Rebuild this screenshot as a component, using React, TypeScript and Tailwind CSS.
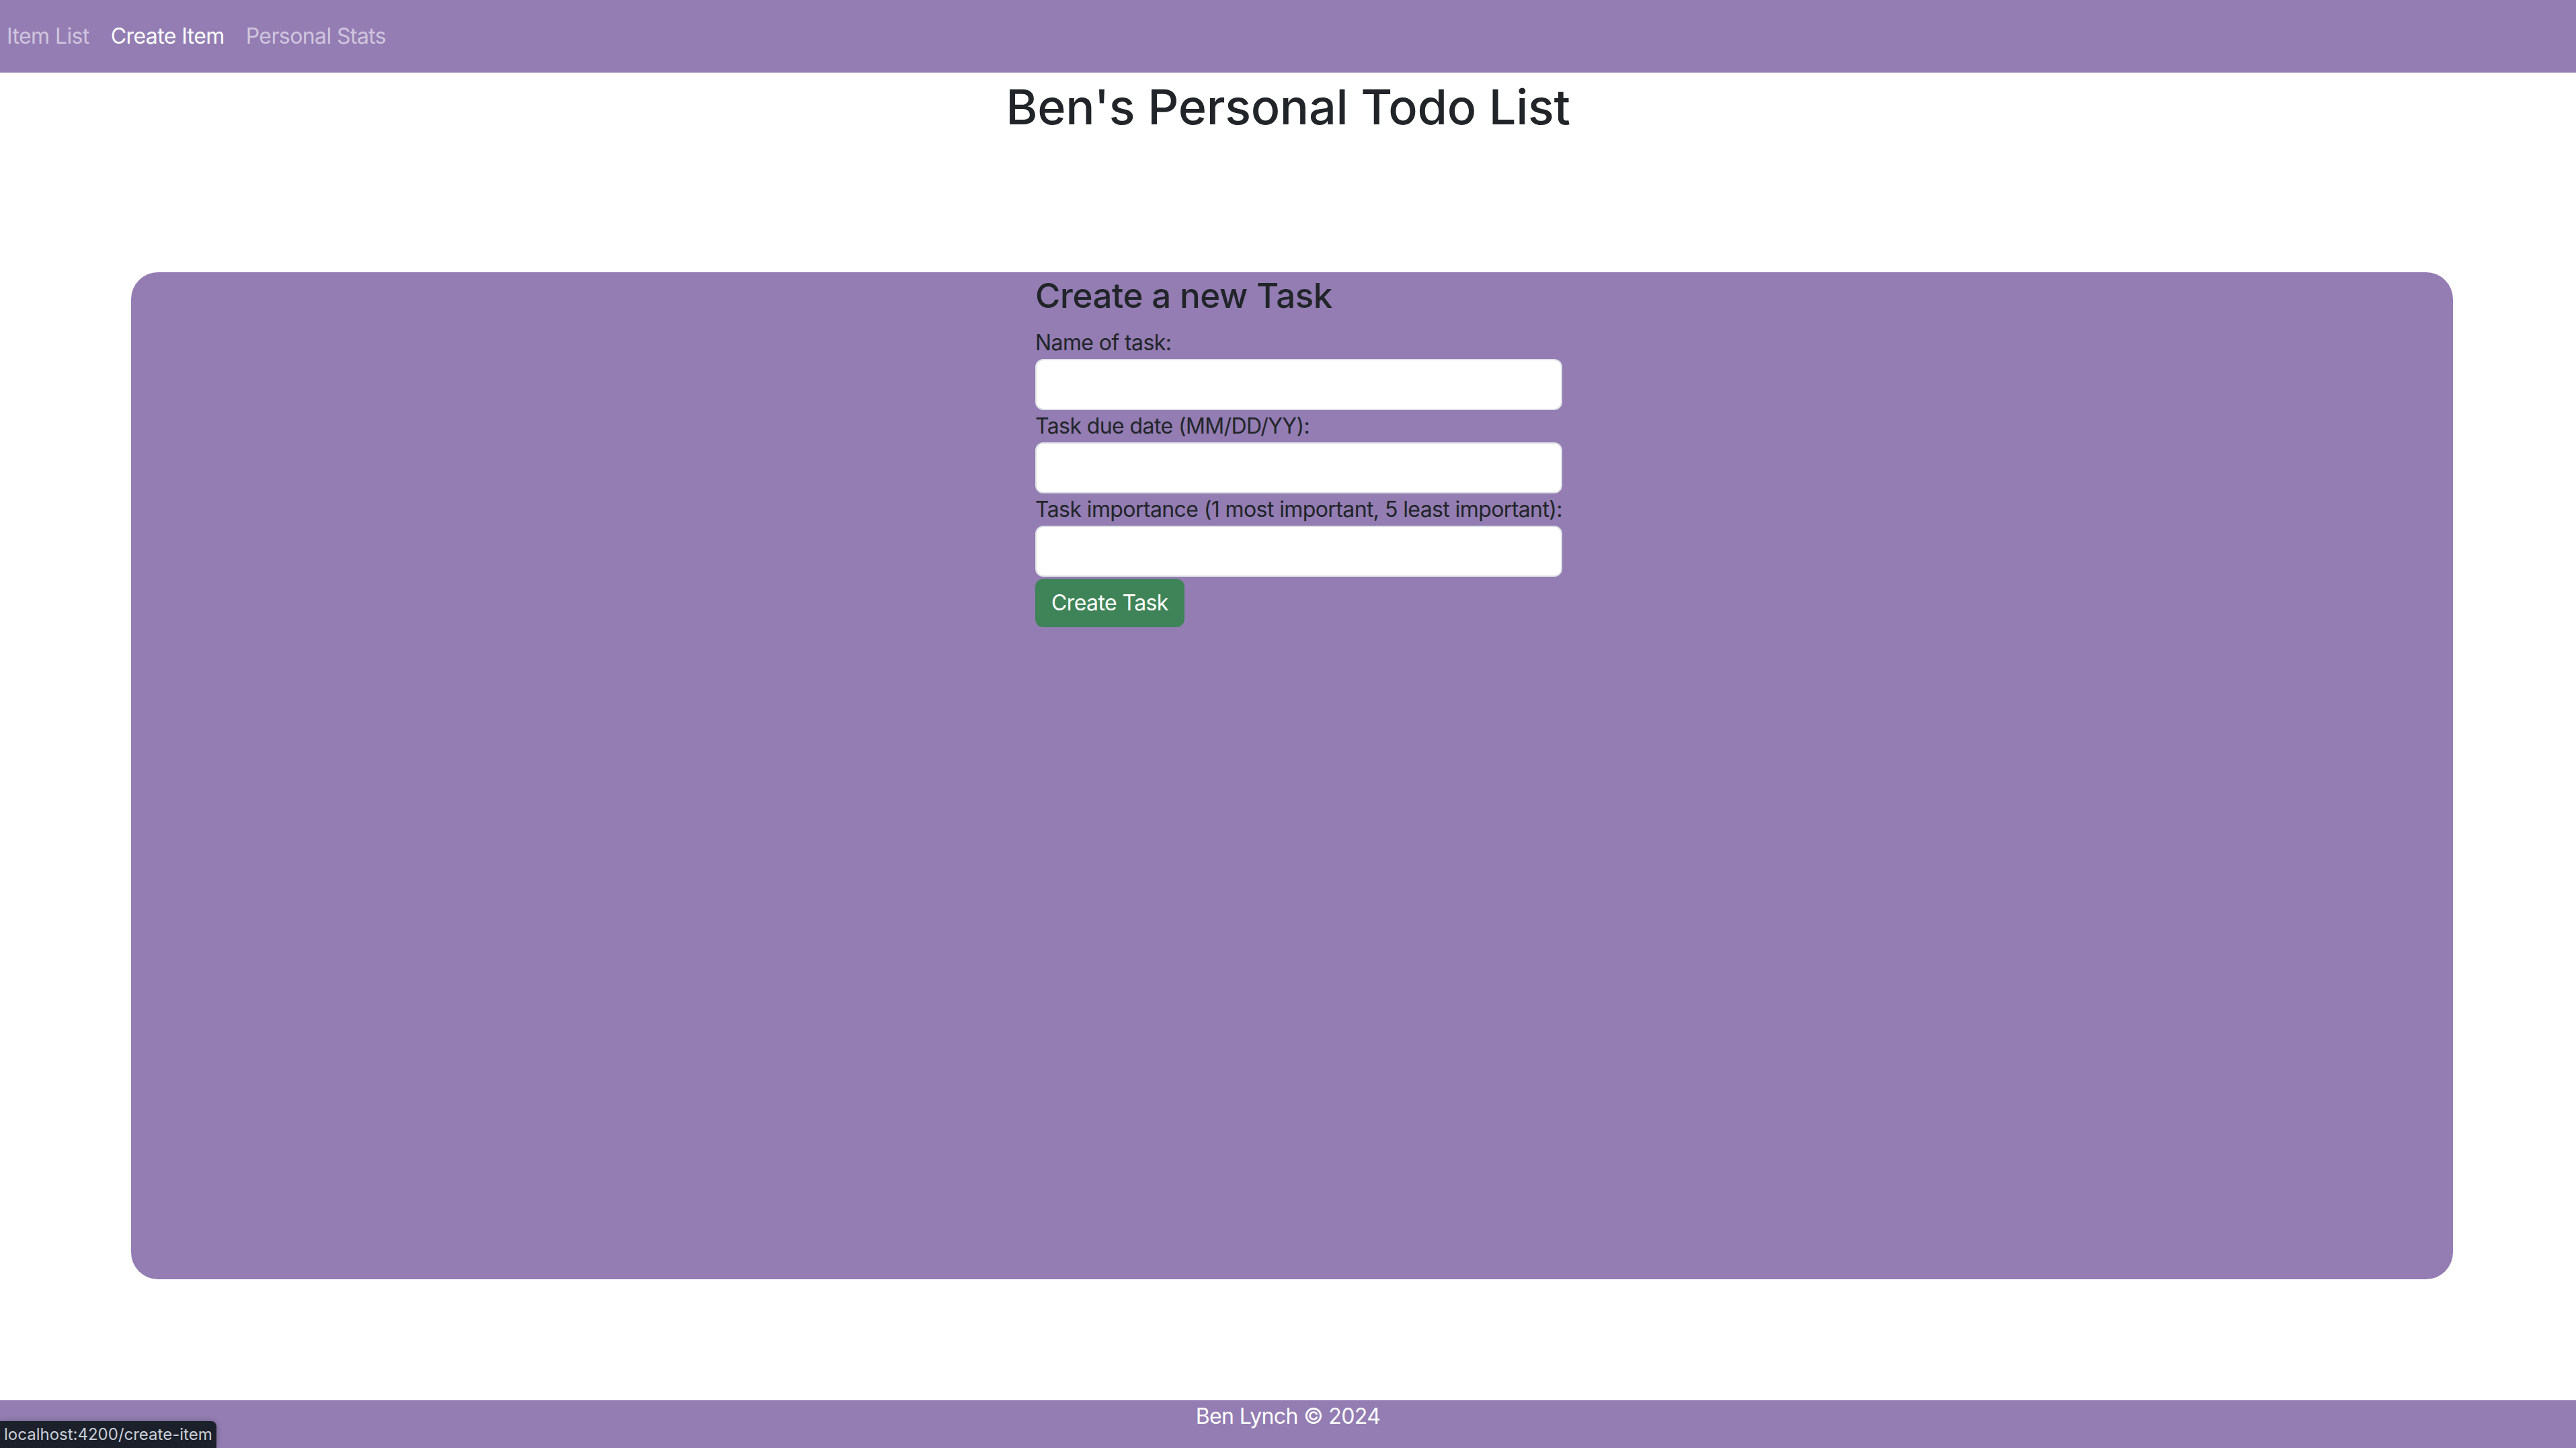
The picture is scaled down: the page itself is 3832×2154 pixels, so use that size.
import React from "react";

export default function App() {
  const font = { fontFamily: "Inter, 'Noto Sans', 'Liberation Sans', sans-serif" };
  return (
    <div className="relative w-[3832px] h-[2154px] bg-white overflow-hidden text-[#212529] tracking-[-0.6px]" style={font}>
      <nav className="h-[108px] bg-[#937db2] flex items-center pl-[10px] gap-[32px] text-[32px] leading-[48px]">
        <span className="text-[#d0c5de]">Item List</span>
        <span className="text-white">Create Item</span>
        <span className="text-[#d0c5de]">Personal Stats</span>
      </nav>
      <h2 className="mt-[8px] text-center text-[72px] leading-[1.2] font-medium text-[#212529] tracking-[-0.3px]">
        Ben's Personal Todo List
      </h2>
      <main className="mt-[203px] ml-[195px] w-[3454px] h-[1498px] rounded-[40px] bg-[#937db2] pt-[4px] pl-[20px]">
        <form className="w-fit mx-auto flex flex-col">
          <h4 className="text-[51px] leading-[1.2] font-medium mb-[15px] tracking-[-0.4px]">Create a new Task</h4>
          <label className="text-[32px] leading-[48px]">Name of task:</label>
          <input className="h-[76px] w-full rounded-[12px] border-2 border-[#dee2e6] bg-white" />
          <label className="text-[32px] leading-[48px]">Task due date (MM/DD/YY):</label>
          <input className="h-[76px] w-full rounded-[12px] border-2 border-[#dee2e6] bg-white" />
          <label className="text-[32px] leading-[48px]">Task importance (1 most important, 5 least important):</label>
          <input className="h-[76px] w-full rounded-[12px] border-2 border-[#dee2e6] bg-white" />
          <div className="mt-[3px]">
            <button type="button" className="h-[72px] px-[24px] rounded-[12px] bg-[#3f8458] text-white text-[32px] leading-[48px]">
              Create Task
            </button>
          </div>
        </form>
      </main>
      <footer className="mt-[180px] h-[72px] bg-[#937db2] text-white text-center text-[32px] leading-[48px]">
        Ben Lynch © 2024
      </footer>
      <div className="absolute left-0 bottom-0 h-[40px] px-[6px] rounded-tr-[8px] bg-[#1b202b] text-[#c9ced8] text-[24px] leading-[40px] tracking-normal shadow-[0_0_8px_rgba(0,0,0,0.25)]">
        localhost:4200/create-item
      </div>
    </div>
  );
}
